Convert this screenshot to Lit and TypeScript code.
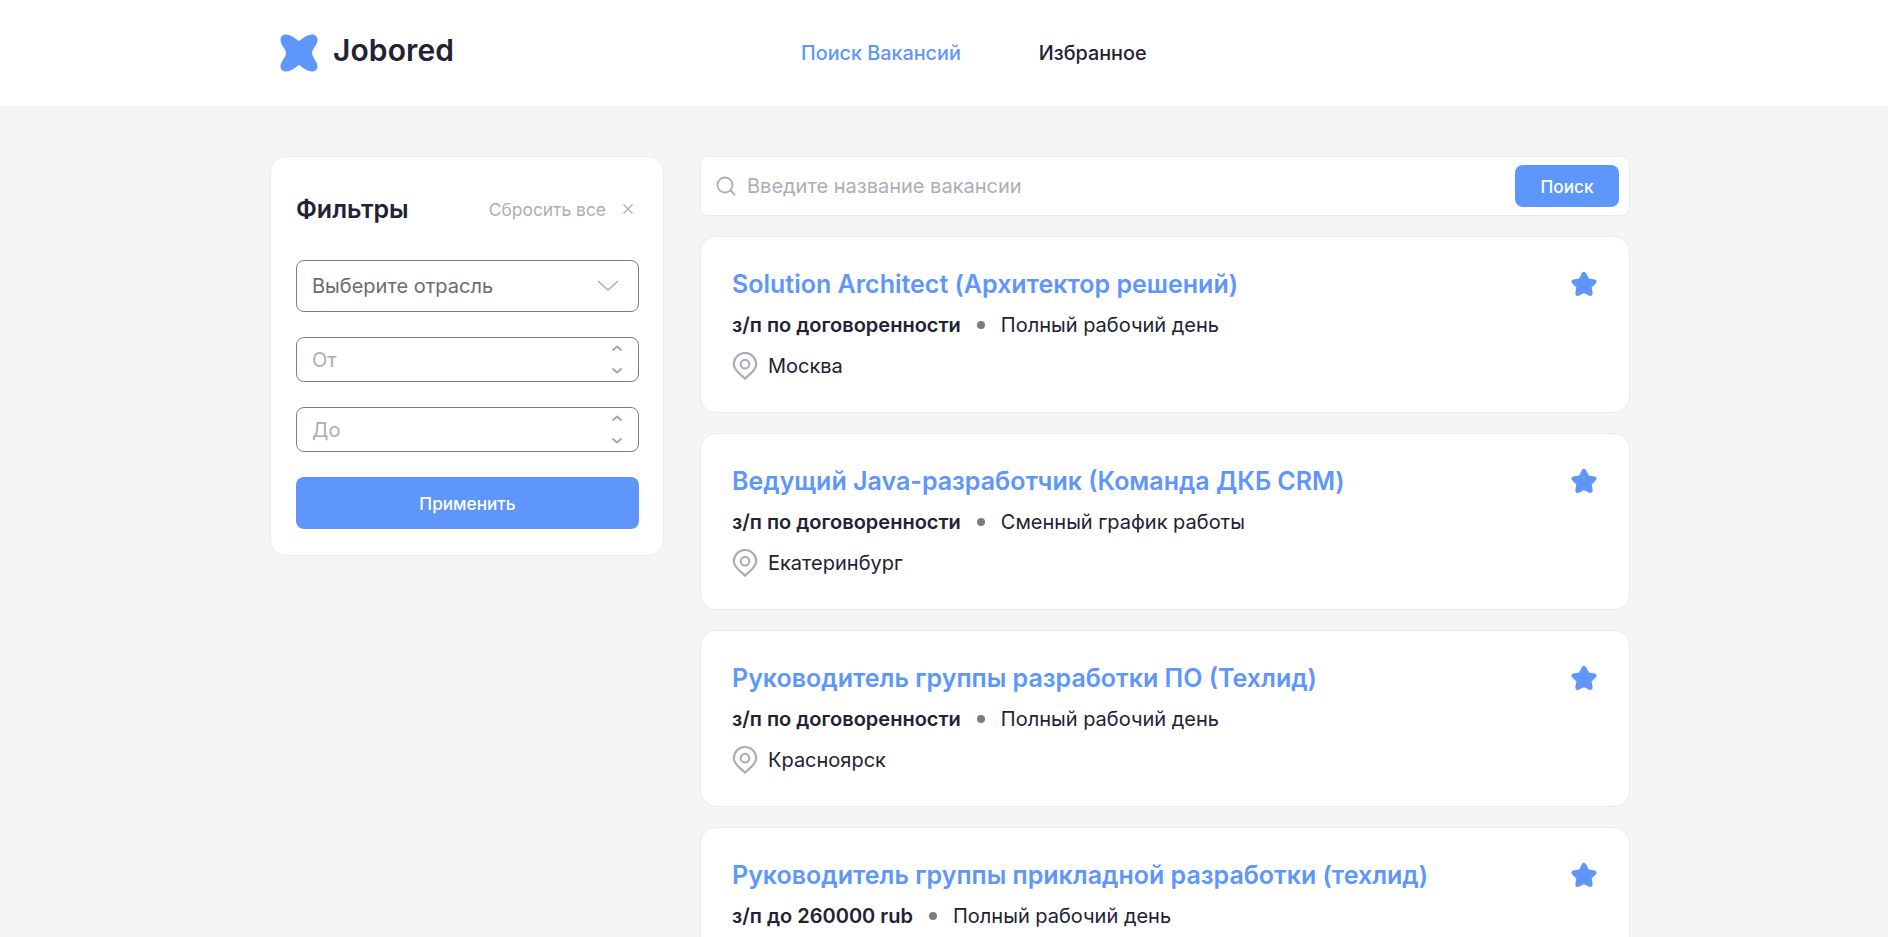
import { LitElement, html, css, svg } from "lit";
import { customElement } from "lit/decorators.js";

const vacancies = [
  { title: "Solution Architect (Архитектор решений)", pay: "з/п по договоренности", type: "Полный рабочий день", town: "Москва" },
  { title: "Ведущий Java-разработчик (Команда ДКБ CRM)", pay: "з/п по договоренности", type: "Сменный график работы", town: "Екатеринбург" },
  { title: "Руководитель группы разработки ПО (Техлид)", pay: "з/п по договоренности", type: "Полный рабочий день", town: "Красноярск" },
  { title: "Руководитель группы прикладной разработки (техлид)", pay: "з/п до 260000 rub", type: "Полный рабочий день", town: "" },
];

const star = svg`<path d="M13 4.500l2.900 5.500 6 1-4.300 4.300.9 6.100L13 18.700l-5.500 2.700.9-6.100L4.100 11l6-1z" fill="#5e96fc" stroke="#5e96fc" stroke-width="4" stroke-linejoin="round"/>`;

@customElement("app-root")
export class AppRoot extends LitElement {
  static styles = css`
    :host {
      display: block;
      height: 100vh;
      overflow: hidden;
      background: #f5f5f6;
      font-family: Inter, "Liberation Sans", sans-serif;
      color: #232134;
    }
    header {
      height: 106px;
      background: #fff;
      display: flex;
      align-items: center;
      padding-left: 280px;
    }
    .logo {
      display: flex;
      align-items: center;
      gap: 15px;
      width: 521px;
      font-size: 30px;
      font-weight: 600;
      letter-spacing: 0.1px;
    }
    .logo svg { display: block; }
    .logo span { margin-bottom: 7px; }
    nav {
      display: flex;
      gap: 78px;
      font-size: 19.8px;
      font-weight: 500;
      margin-top: -1px;
    }
    nav a { color: #232134; }
    nav a.active { color: #5e96fc; }
    main {
      display: flex;
      align-items: flex-start;
      gap: 36px;
      padding: 50px 0 0 270px;
    }
    .filters {
      box-sizing: border-box;
      width: 394px;
      height: 400px;
      background: #fff;
      border: 1px solid #eaebed;
      border-radius: 16px;
      padding: 24px 25px;
      flex: none;
    }
    .filters-head {
      display: flex;
      align-items: center;
      justify-content: space-between;
      height: 56px;
      margin-bottom: 23px;
    }
    .filters-head h2 {
      margin: 0;
      font-size: 25px;
      font-weight: 600;
    }
    .reset {
      display: flex;
      align-items: center;
      gap: 16px;
      color: #acadb9;
      font-size: 17.4px;
      padding-right: 4px;
    }
    .reset svg { display: block; }
    .field {
      box-sizing: border-box;
      width: 343px;
      border: 1px solid #7b7c88;
      border-radius: 8px;
      display: flex;
      align-items: center;
      justify-content: space-between;
      padding: 0 15px;
      font-size: 20px;
      margin-bottom: 25px;
      background: #fff;
    }
    .select { height: 52px; color: #6c6c6c; }
    .select svg { margin-right: 4px; }
    .number { height: 45px; color: #acadb9; }
    .steppers {
      display: flex;
      flex-direction: column;
      justify-content: space-between;
      height: 31px;
      margin-right: -1px;
    }
    .steppers svg { display: block; }
    .apply {
      display: block;
      box-sizing: border-box;
      width: 343px;
      height: 52px;
      background: #5e96fc;
      color: #fff;
      border: none;
      border-radius: 8px;
      font: 500 17.2px Inter, "Liberation Sans", sans-serif;
    }
    .column {
      display: flex;
      flex-direction: column;
      gap: 20px;
      width: 930px;
    }
    .search {
      box-sizing: border-box;
      height: 60px;
      background: #fff;
      border: 1px solid #eaebed;
      border-radius: 8px;
      display: flex;
      align-items: center;
      padding: 0 10px 0 15px;
      font-size: 20px;
      color: #acadb9;
    }
    .search span { flex: 1; margin-left: 11px; }
    .search button {
      width: 104px;
      height: 42px;
      background: #5e96fc;
      color: #fff;
      border: none;
      border-radius: 8px;
      font: 500 17.2px Inter, "Liberation Sans", sans-serif;
    }
    .card {
      box-sizing: border-box;
      height: 177px;
      background: #fff;
      border: 1px solid #eaebed;
      border-radius: 16px;
      padding: 32px 31px 0;
      position: relative;
      flex: none;
    }
    .card h3 {
      margin: 0;
      height: 30px;
      line-height: 30px;
      font-size: 25px;
      font-weight: 600;
      color: #5e96fc;
    }
    .card .fav {
      position: absolute;
      right: 30px;
      top: 32px;
      display: block;
    }
    .meta {
      display: flex;
      align-items: center;
      height: 24px;
      margin-top: 14px;
      font-size: 20px;
    }
    .meta b { font-weight: 600; }
    .meta i {
      width: 8px;
      height: 8px;
      border-radius: 50%;
      background: #7b7c88;
      margin: 0 16px;
      flex: none;
    }
    .town {
      display: flex;
      align-items: center;
      gap: 10px;
      height: 30px;
      margin-top: 14px;
      font-size: 20px;
    }
    .town svg { display: block; }
  `;

  private chevron(d: string) {
    return html`<svg width="14" height="8" viewBox="0 0 14 8" fill="none"><path d=${d} stroke="#a3a4b1" stroke-width="1.800" stroke-linecap="round" stroke-linejoin="round"/></svg>`;
  }

  private numberField(label: string) {
    return html`<div class="field number">
      <span>${label}</span>
      <div class="steppers">
        ${this.chevron("M3 6l4-3.500L11 6")}
        ${this.chevron("M3 2l4 3.500L11 2")}
      </div>
    </div>`;
  }

  render() {
    return html`
      <header>
        <div class="logo">
          <svg width="38" height="38" viewBox="0 0 38 38">
            <path d="M19 7C22 5 27 .5 32 .5 36 .5 37.500 3 37.500 6 37.500 11 32 15 32 19 32 23 37.500 28 37.500 32 37.500 36 35 37.500 32 37.500 27 37.500 22 33 19 31 16 33 11 37.500 6 37.500 3 37.500.5 36 .5 32 .5 28 6 23 6 19 6 15 .5 11 .5 6 .5 3 2 .5 6 .5 11 .5 16 5 19 7Z" fill="#5e96fc"/>
          </svg>
          <span>Jobored</span>
        </div>
        <nav>
          <a class="active">Поиск Вакансий</a>
          <a>Избранное</a>
        </nav>
      </header>
      <main>
        <aside class="filters">
          <div class="filters-head">
            <h2>Фильтры</h2>
            <div class="reset">
              <span>Сбросить все</span>
              <svg width="12" height="12" viewBox="0 0 12 12" fill="none"><path d="M1.500 1.500l9 9M10.500 1.500l-9 9" stroke="#acadb9" stroke-width="1.300"/></svg>
            </div>
          </div>
          <div class="field select">
            <span>Выберите отрасль</span>
            <svg width="22" height="12" viewBox="0 0 22 12" fill="none"><path d="M1.500 1.500L11 10l9.500-8.500" stroke="#acadb9" stroke-width="1.500" stroke-linecap="round"/></svg>
          </div>
          ${this.numberField("От")}
          ${this.numberField("До")}
          <button class="apply">Применить</button>
        </aside>
        <section class="column">
          <div class="search">
            <svg width="20" height="20" viewBox="0 0 20 20" fill="none"><circle cx="9" cy="9" r="7.500" stroke="#acadb9" stroke-width="1.800"/><path d="M14.500 14.500L18.500 18.500" stroke="#acadb9" stroke-width="1.800" stroke-linecap="round"/></svg>
            <span>Введите название вакансии</span>
            <button>Поиск</button>
          </div>
          ${vacancies.map(
            (v) => html`<article class="card">
              <h3>${v.title}</h3>
              <svg class="fav" width="30" height="30" viewBox="0 0 26 26">${star}</svg>
              <div class="meta"><b>${v.pay}</b><i></i><span>${v.type}</span></div>
              <div class="town">
                <svg width="26" height="28" viewBox="0 0 26 28" fill="none">
                  <path d="M13 26.800C9.500 23 1.800 18.500 1.800 12.200a11.200 11.200 0 0 1 22.400 0C24.200 18.500 16.500 23 13 26.800z" stroke="#acadb9" stroke-width="2.200" stroke-linejoin="round"/>
                  <circle cx="13" cy="12.200" r="4.300" stroke="#acadb9" stroke-width="2.200"/>
                </svg>
                <span>${v.town}</span>
              </div>
            </article>`
          )}
        </section>
      </main>
    `;
  }
}
